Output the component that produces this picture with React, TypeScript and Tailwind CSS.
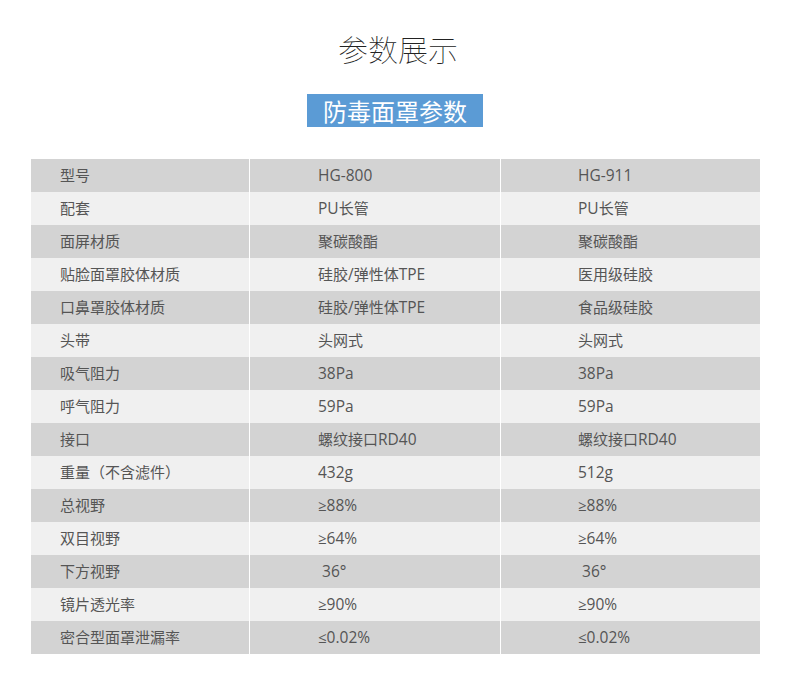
import React from "react";

const rows: [string, string, string][] = [
  ["型号", "HG-800", "HG-911"],
  ["配套", "PU长管", "PU长管"],
  ["面屏材质", "聚碳酸酯", "聚碳酸酯"],
  ["贴脸面罩胶体材质", "硅胶/弹性体TPE", "医用级硅胶"],
  ["口鼻罩胶体材质", "硅胶/弹性体TPE", "食品级硅胶"],
  ["头带", "头网式", "头网式"],
  ["吸气阻力", "38Pa", "38Pa"],
  ["呼气阻力", "59Pa", "59Pa"],
  ["接口", "螺纹接口RD40", "螺纹接口RD40"],
  ["重量（不含滤件）", "432g", "512g"],
  ["总视野", "≥88%", "≥88%"],
  ["双目视野", "≥64%", "≥64%"],
  ["下方视野", " 36°", " 36°"],
  ["镜片透光率", "≥90%", "≥90%"],
  ["密合型面罩泄漏率", "≤0.02%", "≤0.02%"],
];

function Txt({ s }: { s: string }) {
  const parts = s.split(/([A-Za-z0-9.%°/\- ]+)/).filter((p) => p !== "");
  return (
    <>
      {parts.map((p, i) =>
        /^[A-Za-z0-9.%°/\- ]+$/.test(p) ? (
          <span key={i} className="text-[15.5px]">
            {p}
          </span>
        ) : (
          <span key={i}>{p}</span>
        )
      )}
    </>
  );
}

export default function App() {
  return (
    <div
      className="w-[790px] h-[685px] bg-white overflow-hidden"
      style={{ fontFamily: '"Open Sans", "Noto Sans CJK SC", sans-serif' }}
    >
      <div className="flex flex-col items-center pt-[28px]">
        <div
          className="text-[30px] leading-[40px] font-thin text-[#222] pl-[6px]"
          style={{ fontFamily: '"Noto Sans CJK SC", sans-serif' }}
        >
          参数展示
        </div>
        <div
          className="mt-[26px] w-[176px] h-[33px] bg-[#5b9bd5] flex items-center justify-center text-white text-[24px] leading-[33px]"
          style={{ fontFamily: '"Noto Sans CJK SC", sans-serif' }}
        >
          防毒面罩参数
        </div>
      </div>
      <div className="ml-[31px] mt-[32px] w-[729px] flex flex-col">
        {rows.map((r, i) => (
          <div
            key={i}
            className={`grid grid-cols-[219px_251px_259px] h-[33px] text-[15px] text-[#555] ${
              i % 2 === 0 ? "bg-[#d3d3d3]" : "bg-[#f0f0f0]"
            }`}
          >
            <div className="flex items-center pl-[29px] border-r border-white whitespace-pre">
              <Txt s={r[0]} />
            </div>
            <div className="flex items-center pl-[68px] border-r border-white whitespace-pre">
              <Txt s={r[1]} />
            </div>
            <div className="flex items-center pl-[77px] whitespace-pre">
              <Txt s={r[2]} />
            </div>
          </div>
        ))}
      </div>
    </div>
  );
}
